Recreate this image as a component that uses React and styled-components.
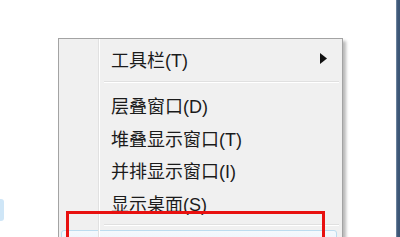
import React from "react";
import styled, { createGlobalStyle } from "styled-components";

const GlobalStyle = createGlobalStyle`
  html, body {
    margin: 0;
    padding: 0;
    background: #ffffff;
    overflow: hidden;
  }
  #root {
    width: 400px;
    height: 237px;
  }
`;

const Page = styled.div`
  display: flex;
  width: 400px;
  height: 237px;
  background: #ffffff;
  overflow: hidden;
  font-family: "Liberation Sans", "Noto Sans CJK SC", sans-serif;
`;

const LeftGutter = styled.div`
  width: 58px;
  flex-shrink: 0;
  padding-top: 199px;
`;

const Blob = styled.div`
  width: 4px;
  height: 22px;
  background: #cfe6f7;
  border-radius: 0 3px 3px 0;
`;

const Desktop = styled.div`
  flex: 1;
  padding-top: 38px;
`;

const RightBar = styled.div`
  width: 4px;
  flex-shrink: 0;
  background: linear-gradient(to right, #7d93ab, #3f5878 40%, #3b5574);
`;

const Menu = styled.div`
  position: relative;
  width: 283px;
  height: 220px;
  background: #f0f0f0;
  border: 1px solid #a3a3a3;
  border-bottom: none;
  box-shadow: 3px 3px 3px rgba(0, 0, 0, 0.28);
  padding-top: 3px;
  box-sizing: border-box;
  width: 285px;
`;

const IconColumn = styled.div`
  position: absolute;
  top: 0;
  bottom: 0;
  left: 39px;
  width: 1px;
  background: #e1e1e1;
  border-right: 1px solid #ffffff;
`;

const Item = styled.div`
  display: flex;
  align-items: center;
  height: ${(p) => p.$h || 32.5}px;
  padding-left: 52px;
  padding-right: 15px;
  font-size: 18px;
  color: #1b1b1b;
  position: relative;
`;

const Label = styled.span`
  flex: 1;
  white-space: nowrap;
`;

const Separator = styled.div`
  height: ${(p) => p.$h}px;
  display: flex;
  align-items: center;
  padding-left: 45px;
  padding-right: 3px;
  position: relative;
  &::after {
    content: "";
    flex: 1;
    height: 1px;
    background: #e0e0e0;
    border-bottom: 1px solid #ffffff;
  }
`;

const Hover = styled.div`
  margin: 0 5px 0 2px;
  height: 20px;
  border: 1px solid #bcdcef;
  border-radius: 3px;
  background: linear-gradient(#f4f9fd, #e6f1fa);
`;

const RedBox = styled.div`
  position: absolute;
  left: 7px;
  top: 172px;
  width: 253px;
  height: 60px;
  border: 3px solid #e8100f;
`;

const Arrow = () => (
  <svg width="7" height="11" viewBox="0 0 7 11">
    <polygon points="0,0 7,5.5 0,11" fill="#111" />
  </svg>
);

export default function App() {
  return (
    <>
      <GlobalStyle />
      <Page>
        <LeftGutter>
          <Blob />
        </LeftGutter>
        <Desktop>
          <Menu>
            <IconColumn />
            <Item $h={33}>
              <Label>工具栏(T)</Label>
              <Arrow />
            </Item>
            <Separator $h={14} />
            <Item>
              <Label>层叠窗口(D)</Label>
            </Item>
            <Item>
              <Label>堆叠显示窗口(T)</Label>
            </Item>
            <Item>
              <Label>并排显示窗口(I)</Label>
            </Item>
            <Item>
              <Label>显示桌面(S)</Label>
            </Item>
            <Separator $h={11} />
            <Hover />
            <RedBox />
          </Menu>
        </Desktop>
        <RightBar />
      </Page>
    </>
  );
}
